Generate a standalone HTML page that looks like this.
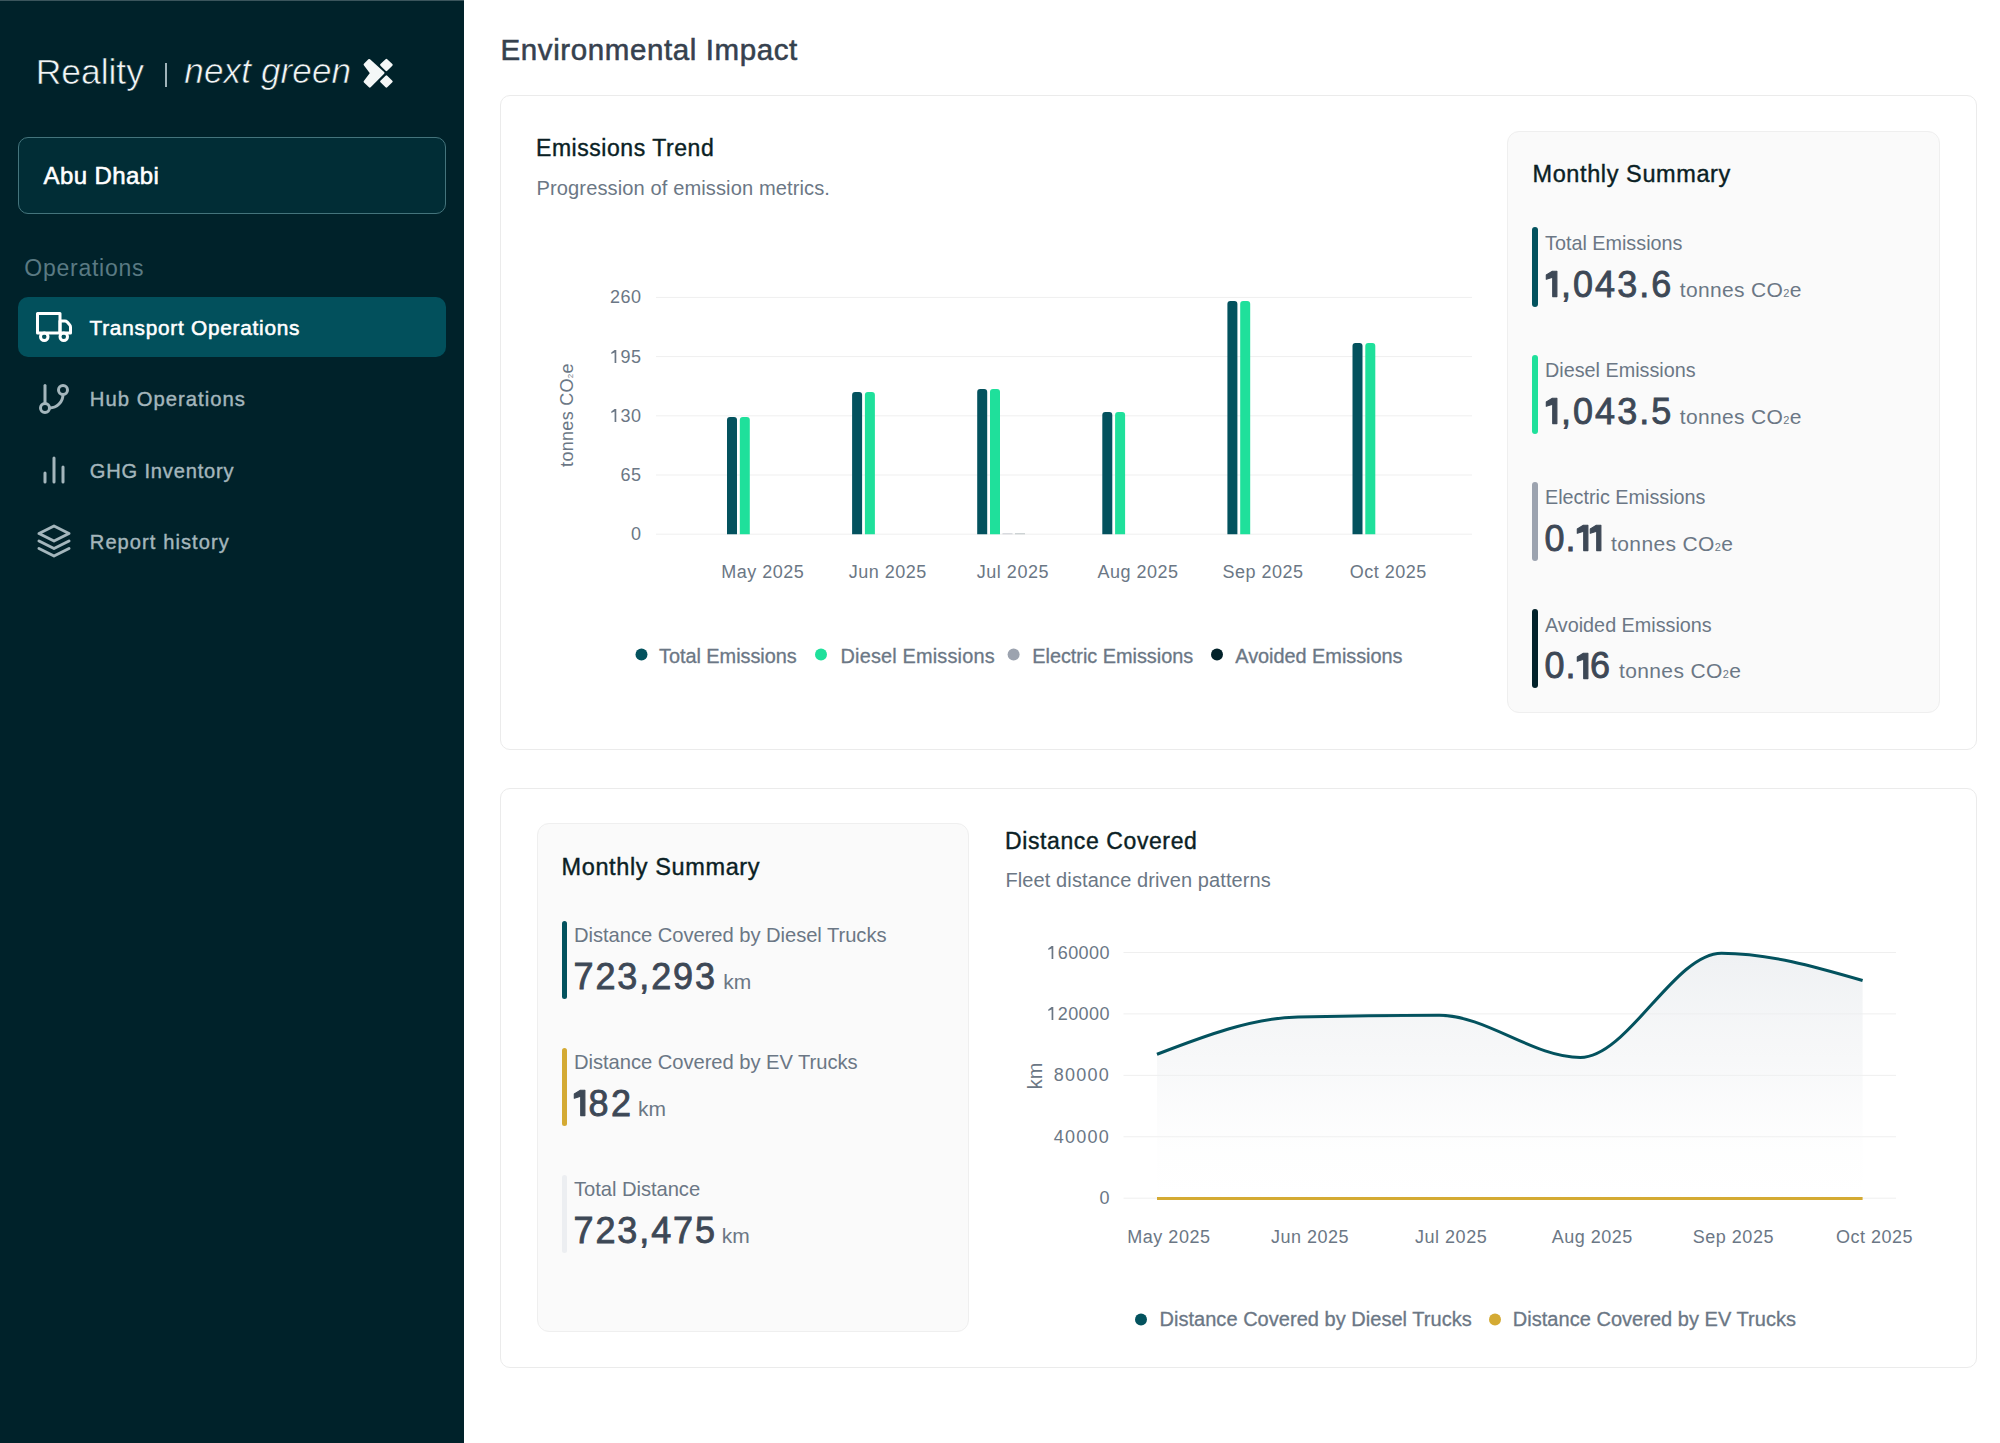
<!DOCTYPE html>
<html><head><meta charset="utf-8"><style>
html,body{margin:0;padding:0;width:2000px;height:1443px;overflow:hidden;background:#fff}
body{position:relative;font-family:"Liberation Sans", sans-serif}
.t{position:absolute;white-space:nowrap;line-height:1}
</style></head><body>
<div style="position:absolute;left:0px;top:0px;width:464px;height:1443px;box-sizing:border-box;background:#00222a"></div>
<div style="position:absolute;left:0px;top:0px;width:464px;height:1px;box-sizing:border-box;background:#3b555c"></div>
<div class="t" style="left:35.80px;top:54.95px;font-size:35.5px;letter-spacing:-0.07px;color:#f2f6f6;font-weight:400;-webkit-text-stroke:0.6px #00222a;">Reality</div>
<div style="position:absolute;left:165.3px;top:63px;width:1.6999999999999886px;height:23.5px;box-sizing:border-box;background:#9fb3b9"></div>
<div class="t" style="left:184.30px;top:53.37px;font-size:35px;letter-spacing:0.14px;color:#f2f6f6;font-weight:400;font-style:italic;-webkit-text-stroke:0.6px #00222a;">next green</div>
<svg style="position:absolute;left:0;top:0" width="464" height="120" viewBox="0 0 464 120">
<g fill="#f4f7f7" stroke="#f4f7f7" stroke-width="2.4" stroke-linejoin="round">
<polygon points="364.8,64.6 369.2,60.2 383.3,73 369.8,86.5 364.8,81.6 371.2,73.1"/>
<polygon points="386.4,60 391.5,64.9 386.4,69.9 381.3,64.9"/>
<polygon points="386.4,76.5 391.5,81.5 386.4,86.5 381.3,81.5"/>
</g></svg>
<div style="position:absolute;left:18px;top:137px;width:428px;height:77px;box-sizing:border-box;background:#012d36;border:1.2px solid #44747c;border-radius:10px"></div>
<div class="t" style="left:43.50px;top:163.98px;font-size:24px;letter-spacing:0.42px;color:#ffffff;font-weight:400;-webkit-text-stroke:0.55px currentColor;">Abu Dhabi</div>
<div class="t" style="left:24.30px;top:256.53px;font-size:23px;letter-spacing:0.75px;color:#5a7a83;font-weight:400;">Operations</div>
<div style="position:absolute;left:18px;top:297px;width:428px;height:59.5px;box-sizing:border-box;background:#02505c;border-radius:10px"></div>
<svg style="position:absolute;left:35.5px;top:309px" width="36" height="36" viewBox="0 0 24 24" fill="none" stroke="#ffffff" stroke-width="2" stroke-linecap="round" stroke-linejoin="round"><rect x="1" y="3" width="15" height="13"/><path d="M16 8h3.3c.6 0 1.1.3 1.5.7l1.6 1.8c.4.4.6 1 .6 1.5V16h-7z"/><circle cx="5.5" cy="18.5" r="2.5"/><circle cx="18.5" cy="18.5" r="2.5"/></svg>
<div class="t" style="left:89.50px;top:317.89px;font-size:20.8px;letter-spacing:0.75px;color:#ffffff;font-weight:400;-webkit-text-stroke:0.55px currentColor;">Transport Operations</div>
<svg style="position:absolute;left:35.5px;top:381px" width="36" height="36" viewBox="0 0 24 24" fill="none" stroke="#a4b6bc" stroke-width="2" stroke-linecap="round" stroke-linejoin="round"><line x1="6" y1="3" x2="6" y2="15"/><circle cx="18" cy="6" r="3"/><circle cx="6" cy="18" r="3"/><path d="M18 9a9 9 0 0 1-9 9"/></svg>
<div class="t" style="left:89.80px;top:389.22px;font-size:20.3px;letter-spacing:1.0px;color:#a4b6bc;font-weight:400;-webkit-text-stroke:0.4px currentColor;">Hub Operations</div>
<svg style="position:absolute;left:35.5px;top:452px" width="36" height="36" viewBox="0 0 24 24" fill="none" stroke="#a4b6bc" stroke-width="2" stroke-linecap="round" stroke-linejoin="round"><line x1="18" y1="20" x2="18" y2="10"/><line x1="12" y1="20" x2="12" y2="4"/><line x1="6" y1="20" x2="6" y2="14"/></svg>
<div class="t" style="left:89.80px;top:460.89px;font-size:20.1px;letter-spacing:0.82px;color:#a4b6bc;font-weight:400;-webkit-text-stroke:0.4px currentColor;">GHG Inventory</div>
<svg style="position:absolute;left:35.5px;top:523px" width="36" height="36" viewBox="0 0 24 24" fill="none" stroke="#a4b6bc" stroke-width="2" stroke-linecap="round" stroke-linejoin="round"><polygon points="12 2 2 7 12 12 22 7 12 2"/><polyline points="2 17 12 22 22 17"/><polyline points="2 12 12 17 22 12"/></svg>
<div class="t" style="left:89.80px;top:531.99px;font-size:20.1px;letter-spacing:1.07px;color:#a4b6bc;font-weight:400;-webkit-text-stroke:0.4px currentColor;">Report history</div>
<div class="t" style="left:500.50px;top:34.73px;font-size:29.5px;letter-spacing:0.6px;color:#36414e;font-weight:400;-webkit-text-stroke:0.55px currentColor;">Environmental Impact</div>
<div style="position:absolute;left:500px;top:95px;width:1477px;height:655px;box-sizing:border-box;border:1px solid #ebebeb;border-radius:10px;background:#fff"></div>
<div class="t" style="left:536.00px;top:137.43px;font-size:23px;letter-spacing:0.55px;color:#0b1f25;font-weight:400;-webkit-text-stroke:0.4px currentColor;">Emissions Trend</div>
<div class="t" style="left:536.50px;top:178.29px;font-size:20.1px;letter-spacing:0.1px;color:#6b7785;font-weight:400;">Progression of emission metrics.</div>
<div class="t" style="right:1358.50px;top:525.16px;font-size:18px;letter-spacing:0.45px;color:#6b7785;font-weight:400;text-align:right;">0</div>
<div class="t" style="right:1358.50px;top:465.96px;font-size:18px;letter-spacing:0.45px;color:#6b7785;font-weight:400;text-align:right;">65</div>
<div class="t" style="right:1358.50px;top:406.76px;font-size:18px;letter-spacing:0.45px;color:#6b7785;font-weight:400;text-align:right;"><span style="display:inline-block;position:relative;width:9.8px;height:12.9px"><svg style="position:absolute;left:0;top:0;overflow:visible" width="6" height="13"><path d="M0.3,2.4 L3.5,0.1 H5.3 V12.9 H3.6 V2.6 L0.3,4.1 Z" fill="currentColor"/></svg></span>30</div>
<div class="t" style="right:1358.50px;top:347.56px;font-size:18px;letter-spacing:0.45px;color:#6b7785;font-weight:400;text-align:right;"><span style="display:inline-block;position:relative;width:9.8px;height:12.9px"><svg style="position:absolute;left:0;top:0;overflow:visible" width="6" height="13"><path d="M0.3,2.4 L3.5,0.1 H5.3 V12.9 H3.6 V2.6 L0.3,4.1 Z" fill="currentColor"/></svg></span>95</div>
<div class="t" style="right:1358.50px;top:288.36px;font-size:18px;letter-spacing:0.45px;color:#6b7785;font-weight:400;text-align:right;">260</div>
<div class="t" style="left:612.70px;width:300px;top:563.16px;font-size:18px;letter-spacing:0.5px;color:#6b7785;font-weight:400;text-align:center;">May 2025</div>
<div class="t" style="left:737.80px;width:300px;top:563.16px;font-size:18px;letter-spacing:0.5px;color:#6b7785;font-weight:400;text-align:center;">Jun 2025</div>
<div class="t" style="left:862.90px;width:300px;top:563.16px;font-size:18px;letter-spacing:0.5px;color:#6b7785;font-weight:400;text-align:center;">Jul 2025</div>
<div class="t" style="left:988.00px;width:300px;top:563.16px;font-size:18px;letter-spacing:0.5px;color:#6b7785;font-weight:400;text-align:center;">Aug 2025</div>
<div class="t" style="left:1113.10px;width:300px;top:563.16px;font-size:18px;letter-spacing:0.5px;color:#6b7785;font-weight:400;text-align:center;">Sep 2025</div>
<div class="t" style="left:1238.20px;width:300px;top:563.16px;font-size:18px;letter-spacing:0.5px;color:#6b7785;font-weight:400;text-align:center;">Oct 2025</div>
<div class="t" style="left:487px;top:406.3px;width:160px;height:18px;line-height:18px;font-size:18px;letter-spacing:0.3px;color:#6b7785;text-align:center;transform:rotate(-90deg);transform-origin:80px 9px">tonnes CO<span style="font-size:8px">2</span>e</div>
<div class="t" style="left:659.00px;top:646.55px;font-size:19.9px;letter-spacing:-0.03px;color:#6b7785;font-weight:400;-webkit-text-stroke:0.3px currentColor;">Total Emissions</div>
<div class="t" style="left:840.50px;top:646.55px;font-size:19.9px;letter-spacing:0.18px;color:#6b7785;font-weight:400;-webkit-text-stroke:0.3px currentColor;">Diesel Emissions</div>
<div class="t" style="left:1032.30px;top:646.55px;font-size:19.9px;letter-spacing:-0.03px;color:#6b7785;font-weight:400;-webkit-text-stroke:0.3px currentColor;">Electric Emissions</div>
<div class="t" style="left:1235.30px;top:646.55px;font-size:19.9px;letter-spacing:-0.03px;color:#6b7785;font-weight:400;-webkit-text-stroke:0.3px currentColor;">Avoided Emissions</div>
<div style="position:absolute;left:1507px;top:131.4px;width:433px;height:582.1px;box-sizing:border-box;background:#fafafa;border:1px solid #efefef;border-radius:12px"></div>
<div class="t" style="left:1532.50px;top:162.81px;font-size:23.5px;letter-spacing:0.6px;color:#0b1f25;font-weight:400;-webkit-text-stroke:0.4px currentColor;">Monthly Summary</div>
<div style="position:absolute;left:1532px;top:227.4px;width:6px;height:79.20000000000002px;box-sizing:border-box;background:#03525e;border-radius:3px"></div>
<div class="t" style="left:1545.00px;top:233.74px;font-size:19.8px;letter-spacing:0px;color:#6b7785;font-weight:400;">Total Emissions</div>
<div class="t" style="left:1545.80px;top:266.53px;font-size:36px;letter-spacing:0px;color:#6b7785;font-weight:400;"><span style="letter-spacing:2.0px;color:#3d4856;-webkit-text-stroke:0.85px currentColor;"><span style="display:inline-block;position:relative;width:15.3px;height:25.8px"><svg style="position:absolute;left:0;top:0;overflow:visible" width="12" height="26"><path d="M0.3,4 L6.4,0.2 H10.9 V25.6 H6.7 V6.3 L0.3,8.3 Z" fill="currentColor" stroke="currentColor" stroke-width="1.1" stroke-linejoin="round"/></svg></span>,043.6</span><span style="font-size:21px;letter-spacing:0.36px;margin-left:6.5px">tonnes CO<span style="font-size:11px">2</span>e</span></div>
<div style="position:absolute;left:1532px;top:354.7px;width:6px;height:79.20000000000005px;box-sizing:border-box;background:#1fe09b;border-radius:3px"></div>
<div class="t" style="left:1545.00px;top:361.04px;font-size:19.8px;letter-spacing:0px;color:#6b7785;font-weight:400;">Diesel Emissions</div>
<div class="t" style="left:1545.80px;top:393.83px;font-size:36px;letter-spacing:0px;color:#6b7785;font-weight:400;"><span style="letter-spacing:2.0px;color:#3d4856;-webkit-text-stroke:0.85px currentColor;"><span style="display:inline-block;position:relative;width:15.3px;height:25.8px"><svg style="position:absolute;left:0;top:0;overflow:visible" width="12" height="26"><path d="M0.3,4 L6.4,0.2 H10.9 V25.6 H6.7 V6.3 L0.3,8.3 Z" fill="currentColor" stroke="currentColor" stroke-width="1.1" stroke-linejoin="round"/></svg></span>,043.5</span><span style="font-size:21px;letter-spacing:0.36px;margin-left:6.5px">tonnes CO<span style="font-size:11px">2</span>e</span></div>
<div style="position:absolute;left:1532px;top:482.0px;width:6px;height:79.20000000000005px;box-sizing:border-box;background:#9ca3af;border-radius:3px"></div>
<div class="t" style="left:1545.00px;top:488.34px;font-size:19.8px;letter-spacing:0px;color:#6b7785;font-weight:400;">Electric Emissions</div>
<div class="t" style="left:1544.50px;top:521.13px;font-size:36px;letter-spacing:0px;color:#6b7785;font-weight:400;"><span style="letter-spacing:1.1px;color:#3d4856;-webkit-text-stroke:0.85px currentColor;">0.<span style="display:inline-block;position:relative;width:13.2px;height:25.8px"><svg style="position:absolute;left:0;top:0;overflow:visible" width="12" height="26"><path d="M0.3,4 L6.4,0.2 H10.9 V25.6 H6.7 V6.3 L0.3,8.3 Z" fill="currentColor" stroke="currentColor" stroke-width="1.1" stroke-linejoin="round"/></svg></span><span style="display:inline-block;position:relative;width:13.2px;height:25.8px"><svg style="position:absolute;left:0;top:0;overflow:visible" width="12" height="26"><path d="M0.3,4 L6.4,0.2 H10.9 V25.6 H6.7 V6.3 L0.3,8.3 Z" fill="currentColor" stroke="currentColor" stroke-width="1.1" stroke-linejoin="round"/></svg></span></span><span style="font-size:21px;letter-spacing:0.36px;margin-left:8px">tonnes CO<span style="font-size:11px">2</span>e</span></div>
<div style="position:absolute;left:1532px;top:609.3px;width:6px;height:79.20000000000005px;box-sizing:border-box;background:#02222a;border-radius:3px"></div>
<div class="t" style="left:1545.00px;top:615.64px;font-size:19.8px;letter-spacing:0px;color:#6b7785;font-weight:400;">Avoided Emissions</div>
<div class="t" style="left:1544.50px;top:648.43px;font-size:36px;letter-spacing:0px;color:#6b7785;font-weight:400;"><span style="letter-spacing:1.1px;color:#3d4856;-webkit-text-stroke:0.85px currentColor;">0.<span style="display:inline-block;position:relative;width:13.2px;height:25.8px"><svg style="position:absolute;left:0;top:0;overflow:visible" width="12" height="26"><path d="M0.3,4 L6.4,0.2 H10.9 V25.6 H6.7 V6.3 L0.3,8.3 Z" fill="currentColor" stroke="currentColor" stroke-width="1.1" stroke-linejoin="round"/></svg></span>6</span><span style="font-size:21px;letter-spacing:0.36px;margin-left:8px">tonnes CO<span style="font-size:11px">2</span>e</span></div>
<div style="position:absolute;left:500px;top:787.5px;width:1477px;height:580.0px;box-sizing:border-box;border:1px solid #ebebeb;border-radius:10px;background:#fff"></div>
<div style="position:absolute;left:536.5px;top:823.3px;width:432.20000000000005px;height:508.70000000000005px;box-sizing:border-box;background:#fafafa;border:1px solid #efefef;border-radius:12px"></div>
<div class="t" style="left:561.50px;top:855.61px;font-size:23.5px;letter-spacing:0.62px;color:#0b1f25;font-weight:400;-webkit-text-stroke:0.4px currentColor;">Monthly Summary</div>
<div style="position:absolute;left:561.8px;top:920.5px;width:5.7000000000000455px;height:78.0px;box-sizing:border-box;background:#03525e;border-radius:3px"></div>
<div class="t" style="left:574.00px;top:924.60px;font-size:20.2px;letter-spacing:-0.05px;color:#6b7785;font-weight:400;">Distance Covered by Diesel Trucks</div>
<div class="t" style="left:573.50px;top:958.53px;font-size:36px;letter-spacing:0px;color:#6b7785;font-weight:400;"><span style="letter-spacing:1.9px;color:#3d4856;-webkit-text-stroke:0.85px currentColor;">723,293</span><span style="font-size:21px;margin-left:6.3px">km</span></div>
<div style="position:absolute;left:561.8px;top:1047.8px;width:5.7000000000000455px;height:78.0px;box-sizing:border-box;background:#d4aa33;border-radius:3px"></div>
<div class="t" style="left:574.00px;top:1051.90px;font-size:20.2px;letter-spacing:-0.05px;color:#6b7785;font-weight:400;">Distance Covered by EV Trucks</div>
<div class="t" style="left:573.50px;top:1085.83px;font-size:36px;letter-spacing:0px;color:#6b7785;font-weight:400;"><span style="letter-spacing:2.5px;color:#3d4856;-webkit-text-stroke:0.85px currentColor;"><span style="display:inline-block;position:relative;width:15px;height:25.8px"><svg style="position:absolute;left:0;top:0;overflow:visible" width="12" height="26"><path d="M0.3,4 L6.4,0.2 H10.9 V25.6 H6.7 V6.3 L0.3,8.3 Z" fill="currentColor" stroke="currentColor" stroke-width="1.1" stroke-linejoin="round"/></svg></span>82</span><span style="font-size:21px;margin-left:4.4px">km</span></div>
<div style="position:absolute;left:561.8px;top:1175.1px;width:5.7000000000000455px;height:78.0px;box-sizing:border-box;background:#eceef1;border-radius:3px"></div>
<div class="t" style="left:574.00px;top:1179.20px;font-size:20.2px;letter-spacing:-0.05px;color:#6b7785;font-weight:400;">Total Distance</div>
<div class="t" style="left:573.50px;top:1213.13px;font-size:36px;letter-spacing:0px;color:#6b7785;font-weight:400;"><span style="letter-spacing:1.9px;color:#3d4856;-webkit-text-stroke:0.85px currentColor;">723,475</span><span style="font-size:21px;margin-left:4.8px">km</span></div>
<div class="t" style="left:1005.00px;top:829.73px;font-size:23px;letter-spacing:0.6px;color:#0b1f25;font-weight:400;-webkit-text-stroke:0.4px currentColor;">Distance Covered</div>
<div class="t" style="left:1005.50px;top:869.77px;font-size:20px;letter-spacing:0.1px;color:#6b7785;font-weight:400;">Fleet distance driven patterns</div>
<div class="t" style="right:890.00px;top:1189.26px;font-size:18px;letter-spacing:0.45px;color:#6b7785;font-weight:400;text-align:right;">0</div>
<div class="t" style="right:890.00px;top:1127.83px;font-size:18px;letter-spacing:1.25px;color:#6b7785;font-weight:400;text-align:right;">40000</div>
<div class="t" style="right:890.00px;top:1066.40px;font-size:18px;letter-spacing:1.25px;color:#6b7785;font-weight:400;text-align:right;">80000</div>
<div class="t" style="right:890.00px;top:1004.97px;font-size:18px;letter-spacing:0.45px;color:#6b7785;font-weight:400;text-align:right;"><span style="display:inline-block;position:relative;width:9.8px;height:12.9px"><svg style="position:absolute;left:0;top:0;overflow:visible" width="6" height="13"><path d="M0.3,2.4 L3.5,0.1 H5.3 V12.9 H3.6 V2.6 L0.3,4.1 Z" fill="currentColor"/></svg></span>20000</div>
<div class="t" style="right:890.00px;top:943.54px;font-size:18px;letter-spacing:0.45px;color:#6b7785;font-weight:400;text-align:right;"><span style="display:inline-block;position:relative;width:9.8px;height:12.9px"><svg style="position:absolute;left:0;top:0;overflow:visible" width="6" height="13"><path d="M0.3,2.4 L3.5,0.1 H5.3 V12.9 H3.6 V2.6 L0.3,4.1 Z" fill="currentColor"/></svg></span>60000</div>
<div class="t" style="left:1018.90px;width:300px;top:1227.76px;font-size:18px;letter-spacing:0.5px;color:#6b7785;font-weight:400;text-align:center;">May 2025</div>
<div class="t" style="left:1160.02px;width:300px;top:1227.76px;font-size:18px;letter-spacing:0.5px;color:#6b7785;font-weight:400;text-align:center;">Jun 2025</div>
<div class="t" style="left:1301.14px;width:300px;top:1227.76px;font-size:18px;letter-spacing:0.5px;color:#6b7785;font-weight:400;text-align:center;">Jul 2025</div>
<div class="t" style="left:1442.26px;width:300px;top:1227.76px;font-size:18px;letter-spacing:0.5px;color:#6b7785;font-weight:400;text-align:center;">Aug 2025</div>
<div class="t" style="left:1583.38px;width:300px;top:1227.76px;font-size:18px;letter-spacing:0.5px;color:#6b7785;font-weight:400;text-align:center;">Sep 2025</div>
<div class="t" style="left:1724.50px;width:300px;top:1227.76px;font-size:18px;letter-spacing:0.5px;color:#6b7785;font-weight:400;text-align:center;">Oct 2025</div>
<div class="t" style="left:994.7px;top:1065.5px;width:80px;height:20px;line-height:20px;font-size:20px;color:#6b7785;text-align:center;transform:rotate(-90deg);transform-origin:40px 10px">km</div>
<div class="t" style="left:1159.50px;top:1308.57px;font-size:20px;letter-spacing:0.03px;color:#6b7785;font-weight:400;-webkit-text-stroke:0.3px currentColor;">Distance Covered by Diesel Trucks</div>
<div class="t" style="left:1512.80px;top:1308.57px;font-size:20px;letter-spacing:0.03px;color:#6b7785;font-weight:400;-webkit-text-stroke:0.3px currentColor;">Distance Covered by EV Trucks</div>
<svg style="position:absolute;left:0;top:0" width="2000" height="1443" viewBox="0 0 2000 1443">
<line x1="656" y1="534.2" x2="1472" y2="534.2" stroke="#efefef" stroke-width="1"/>
<line x1="656" y1="475.00000000000006" x2="1472" y2="475.00000000000006" stroke="#efefef" stroke-width="1"/>
<line x1="656" y1="415.80000000000007" x2="1472" y2="415.80000000000007" stroke="#efefef" stroke-width="1"/>
<line x1="656" y1="356.6" x2="1472" y2="356.6" stroke="#efefef" stroke-width="1"/>
<line x1="656" y1="297.40000000000003" x2="1472" y2="297.40000000000003" stroke="#efefef" stroke-width="1"/>
<path d="M727.0,534.2 V420 Q727.0,417 730.0,417 H734.0 Q737.0,417 737.0,420 V534.2 Z" fill="#03525e"/>
<path d="M739.8,534.2 V420 Q739.8,417 742.8,417 H746.8 Q749.8,417 749.8,420 V534.2 Z" fill="#1fe09b"/>
<path d="M852.1,534.2 V395 Q852.1,392 855.1,392 H859.1 Q862.1,392 862.1,395 V534.2 Z" fill="#03525e"/>
<path d="M864.9,534.2 V395 Q864.9,392 867.9,392 H871.9 Q874.9,392 874.9,395 V534.2 Z" fill="#1fe09b"/>
<path d="M977.2,534.2 V392 Q977.2,389 980.2,389 H984.2 Q987.2,389 987.2,392 V534.2 Z" fill="#03525e"/>
<path d="M990.0,534.2 V392 Q990.0,389 993.0,389 H997.0 Q1000.0,389 1000.0,392 V534.2 Z" fill="#1fe09b"/>
<path d="M1102.3,534.2 V415 Q1102.3,412 1105.3,412 H1109.3 Q1112.3,412 1112.3,415 V534.2 Z" fill="#03525e"/>
<path d="M1115.1,534.2 V415 Q1115.1,412 1118.1,412 H1122.1 Q1125.1,412 1125.1,415 V534.2 Z" fill="#1fe09b"/>
<path d="M1227.4,534.2 V304 Q1227.4,301 1230.4,301 H1234.4 Q1237.4,301 1237.4,304 V534.2 Z" fill="#03525e"/>
<path d="M1240.1999999999998,534.2 V304 Q1240.1999999999998,301 1243.1999999999998,301 H1247.1999999999998 Q1250.1999999999998,301 1250.1999999999998,304 V534.2 Z" fill="#1fe09b"/>
<path d="M1352.5,534.2 V346 Q1352.5,343 1355.5,343 H1359.5 Q1362.5,343 1362.5,346 V534.2 Z" fill="#03525e"/>
<path d="M1365.3,534.2 V346 Q1365.3,343 1368.3,343 H1372.3 Q1375.3,343 1375.3,346 V534.2 Z" fill="#1fe09b"/>
<rect x="1002.5" y="533.4000000000001" width="10" height="0.8" fill="#9ca3af" opacity="0.6"/>
<rect x="1015" y="533.4000000000001" width="10" height="0.8" fill="#02222a" opacity="0.3"/>
<circle cx="641.5" cy="654.6" r="6" fill="#03525e"/>
<circle cx="821" cy="654.6" r="6" fill="#1fe09b"/>
<circle cx="1013.6" cy="654.6" r="6" fill="#9ca3af"/>
<circle cx="1217" cy="654.6" r="6" fill="#02222a"/>
<line x1="1123.5" y1="1198.20" x2="1896" y2="1198.20" stroke="#efefef" stroke-width="1"/>
<line x1="1123.5" y1="1136.77" x2="1896" y2="1136.77" stroke="#efefef" stroke-width="1"/>
<line x1="1123.5" y1="1075.34" x2="1896" y2="1075.34" stroke="#efefef" stroke-width="1"/>
<line x1="1123.5" y1="1013.91" x2="1896" y2="1013.91" stroke="#efefef" stroke-width="1"/>
<line x1="1123.5" y1="952.48" x2="1896" y2="952.48" stroke="#efefef" stroke-width="1"/>
<defs><linearGradient id="ag" x1="0" y1="0" x2="0" y2="1"><stop offset="0" stop-color="#e8ebee" stop-opacity="0.7"/><stop offset="0.45" stop-color="#eef0f2" stop-opacity="0.45"/><stop offset="0.8" stop-color="#f3f4f6" stop-opacity="0.1"/><stop offset="1" stop-color="#f3f4f6" stop-opacity="0"/></linearGradient></defs>
<path d="M1157.00,1054.30C1204.04,1036.22 1251.08,1018.13 1298.12,1017.00C1345.16,1015.87 1392.20,1015.30 1439.24,1015.30C1486.28,1015.30 1533.32,1057.50 1580.36,1057.50C1627.40,1057.50 1674.44,953.20 1721.48,953.20C1768.52,953.20 1815.56,966.85 1862.60,980.50 L1862.60,1198.2 L1157.00,1198.2 Z" fill="url(#ag)"/>
<path d="M1157.00,1054.30C1204.04,1036.22 1251.08,1018.13 1298.12,1017.00C1345.16,1015.87 1392.20,1015.30 1439.24,1015.30C1486.28,1015.30 1533.32,1057.50 1580.36,1057.50C1627.40,1057.50 1674.44,953.20 1721.48,953.20C1768.52,953.20 1815.56,966.85 1862.60,980.50" fill="none" stroke="#03525e" stroke-width="3"/>
<line x1="1157.0" y1="1198.6000000000001" x2="1862.6" y2="1198.6000000000001" stroke="#d4aa33" stroke-width="3"/>
<circle cx="1141" cy="1319.6" r="6" fill="#03525e"/>
<circle cx="1495" cy="1319.6" r="6" fill="#d4aa33"/>
</svg>
</body></html>
